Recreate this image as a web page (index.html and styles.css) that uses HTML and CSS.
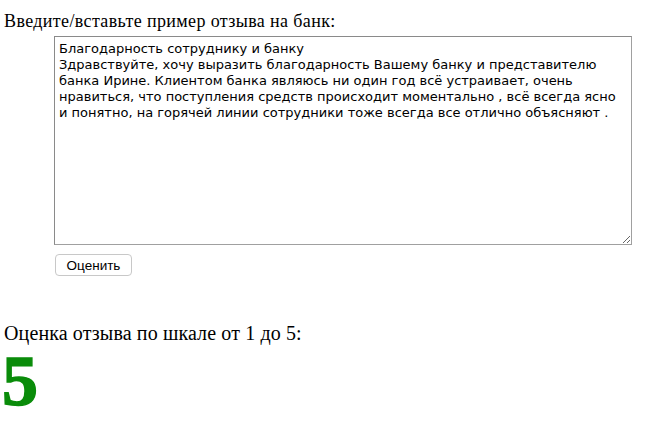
FILE: index.html
```html
<!DOCTYPE html>
<html lang="ru">
<head>
<meta charset="utf-8">
<link rel="stylesheet" href="styles.css">
</head>
<body>
<div class="page">
  <div class="prompt">Введите/вставьте пример отзыва на банк:</div>
  <div class="form">
    <textarea class="review">Благодарность сотруднику и банку
Здравствуйте, хочу выразить благодарность Вашему банку и представителю банка Ирине. Клиентом банка являюсь ни один год всё устраивает, очень нравиться, что поступления средств происходит моментально , всё всегда ясно и понятно, на горячей линии сотрудники тоже всегда все отлично объясняют .</textarea>
    <button class="btn">Оценить</button>
  </div>
  <div class="result-label">Оценка отзыва по шкале от 1 до 5:</div>
  <div class="score">5</div>
</div>
</body>
</html>
```
FILE: styles.css
```css
html, body {
  margin: 0;
  padding: 0;
  background: #fff;
}
.page {
  display: flex;
  flex-direction: column;
  align-items: flex-start;
  padding: 10px 0 0 4px;
  font-family: "Liberation Serif", "Times New Roman", serif;
  font-size: 18px;
  color: #000;
}
.prompt {
  line-height: 22px;
  letter-spacing: 0.37px;
}
.form {
  display: flex;
  flex-direction: column;
  align-items: flex-start;
  gap: 9px;
  padding-left: 50px;
  margin-top: 4px;
}
.review {
  box-sizing: border-box;
  width: 578px;
  height: 209px;
  margin: 0;
  padding: 4px 4px;
  border: 1px solid #a0a0a0;
  border-top-color: #8a8a8a;
  border-left-color: #8a8a8a;
  font-family: "DejaVu Sans", Verdana, sans-serif;
  font-size: 13px;
  line-height: 16px;
  color: #000;
  resize: both;
}
.btn {
  box-sizing: border-box;
  height: 22px;
  width: 77px;
  margin: 0 0 0 1px;
  padding: 0 8px;
  border: 1px solid #c8c8c8;
  border-radius: 4px;
  background: #fff;
  font-family: "Liberation Sans", Arial, sans-serif;
  font-size: 13.5px;
  color: #000;
}
.result-label {
  margin-top: 46px;
  font-size: 20px;
  line-height: 22px;
  letter-spacing: 0.12px;
}
.score {
  margin: 5px 0 0 -2px;
  font-weight: 700;
  font-size: 72px;
  line-height: 64px;
  color: #0a8c0a;
  -webkit-text-stroke: 1.5px #0a8c0a;
}
```
